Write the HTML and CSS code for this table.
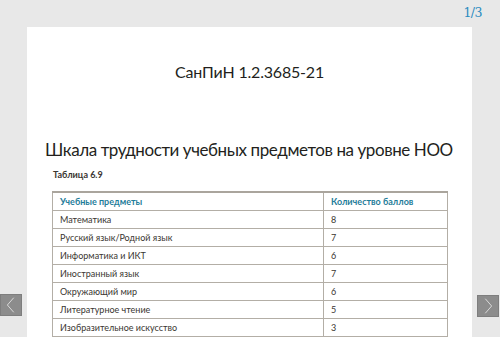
FILE: index.html
```html
<!DOCTYPE html>
<html lang="ru">
<head>
<meta charset="utf-8">
<link rel="stylesheet" href="styles.css">
</head>
<body>
<div class="viewer">
  <div class="topbar"><span class="counter">1/3</span></div>
  <div class="page">
    <h1 class="doc-title">СанПиН 1.2.3685-21</h1>
    <h2 class="heading">Шкала трудности учебных предметов на уровне НОО</h2>
    <div class="caption">Таблица 6.9</div>
    <table class="grid">
      <thead>
        <tr><th class="c1">Учебные предметы</th><th>Количество баллов</th></tr>
      </thead>
      <tbody>
        <tr><td>Математика</td><td>8</td></tr>
        <tr><td>Русский язык/Родной язык</td><td>7</td></tr>
        <tr><td>Информатика и ИКТ</td><td>6</td></tr>
        <tr><td>Иностранный язык</td><td>7</td></tr>
        <tr><td>Окружающий мир</td><td>6</td></tr>
        <tr><td>Литературное чтение</td><td>5</td></tr>
        <tr><td>Изобразительное искусство</td><td>3</td></tr>
      </tbody>
    </table>
  </div>
  <button class="nav nav-prev" aria-label="Назад"><svg width="22" height="22" viewBox="0 0 22 22"><path d="M14 3 L7 11 L14 19" fill="none" stroke="#e0e0e0" stroke-width="1"/></svg></button>
  <button class="nav nav-next" aria-label="Вперёд"><svg width="22" height="22" viewBox="0 0 22 22"><path d="M8 3 L15 11 L8 19" fill="none" stroke="#e0e0e0" stroke-width="1"/></svg></button>
</div>
</body>
</html>
```
FILE: styles.css
```css
html, body {
  margin: 0;
  padding: 0;
  height: 100%;
  overflow: hidden;
  background: #e8e8e8;
}
.viewer {
  position: relative;
  height: 337px;
  overflow: hidden;
}
.topbar {
  height: 27px;
  display: flex;
  justify-content: flex-end;
  align-items: flex-start;
  padding-right: 18px;
  box-sizing: border-box;
}
.counter {
  font-family: "DejaVu Serif", "Liberation Serif", serif;
  font-size: 12.5px;
  color: #2a8bc0;
  margin-top: 5px;
  letter-spacing: -0.5px;
}
.page {
  margin-left: 27px;
  width: 445px;
  height: 400px;
  background: #fff;
  padding: 33px 0 0 18px;
  box-sizing: border-box;
  font-family: Lato, "Noto Sans", sans-serif;
}
.doc-title {
  margin: 0 0 0 -18px;
  text-align: center;
  font-weight: 400;
  font-size: 16px;
  letter-spacing: -0.2px;
  line-height: 24px;
  color: #231f1c;
}
.heading {
  margin: 54px 0 0 0;
  font-weight: 400;
  font-size: 17px;
  letter-spacing: -0.42px;
  line-height: 24px;
  color: #231f1c;
  white-space: nowrap;
}
.caption {
  margin: 7px 0 0 8px;
  font-size: 9px;
  font-weight: 700;
  color: #3a3631;
}
.grid {
  margin: 11px 0 0 7px;
  width: 396px;
  border-collapse: collapse;
  font-size: 9px;
  color: #3a3631;
}
.grid th, .grid td {
  border: 1px solid #b3aea6;
  height: 18px;
  padding: 0 0 0 7px;
  text-align: left;
  box-sizing: border-box;
}
.grid th {
  color: #1f7d9a;
  font-weight: 700;
  border-top: 2px solid #aaa59d;
}
.grid .c1 { width: 271px; }
.nav {
  position: absolute;
  width: 22px;
  height: 22px;
  padding: 0;
  border: 1px solid #7e7e7e;
  background: #8c8c8c;
  display: flex;
  align-items: center;
  justify-content: center;
}
.nav svg { display: block; }
.nav-prev { left: 0; top: 294px; }
.nav-next { left: 477px; top: 295px; }
```
